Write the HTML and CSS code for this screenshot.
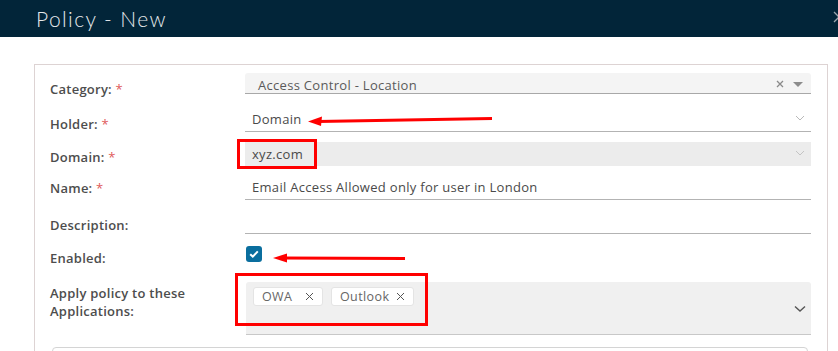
FILE: index.html
```html
<!DOCTYPE html>
<html>
<head>
<meta charset="utf-8">
<link rel="stylesheet" href="styles.css">
</head>
<body>
<header class="hdr">
  <h1 class="title">Policy - New</h1>
  <svg class="close" width="12" height="12" viewBox="0 0 12 12"><path d="M1 1 L11 11 M11 1 L1 11" stroke="#9aa5ad" stroke-width="1.3"/></svg>
</header>
<main class="content">
  <section class="card">
    <div class="row r-cat">
      <label class="lbl">Category: <span class="req">*</span></label>
      <div class="ctl sel-cat">
        <span class="val">Access Control - Location</span>
        <span class="cat-icons">
          <svg width="8" height="8" viewBox="0 0 8 8"><path d="M1 1 L7 7 M7 1 L1 7" stroke="#8a8a8a" stroke-width="1.3"/></svg>
          <span class="cat-tri"></span>
        </span>
      </div>
    </div>
    <div class="row r-holder">
      <label class="lbl">Holder: <span class="req">*</span></label>
      <div class="ctl sel-line">
        <span class="val">Domain</span>
        <svg class="chev-l" width="10" height="6" viewBox="0 0 10 6"><path d="M1 1 L5 5 L9 1" fill="none" stroke="#b9b9b9" stroke-width="1"/></svg>
      </div>
    </div>
    <div class="row r-domain">
      <label class="lbl">Domain: <span class="req">*</span></label>
      <div class="ctl sel-dis">
        <span class="val">xyz.com</span>
        <svg class="chev-l" width="10" height="6" viewBox="0 0 10 6"><path d="M1 1 L5 5 L9 1" fill="none" stroke="#c4c4c4" stroke-width="1"/></svg>
      </div>
    </div>
    <div class="row r-name">
      <label class="lbl">Name: <span class="req">*</span></label>
      <div class="ctl inp">
        <span class="val">Email Access Allowed only for user in London</span>
      </div>
    </div>
    <div class="row r-desc">
      <label class="lbl">Description:</label>
      <div class="ctl inp"></div>
    </div>
    <div class="row r-enabled">
      <label class="lbl">Enabled:</label>
      <div class="ctl">
        <span class="chk"><svg width="10" height="8" viewBox="0 0 10 8"><path d="M1.2 4.2 L3.8 6.6 L8.8 1.4" fill="none" stroke="#fff" stroke-width="2"/></svg></span>
      </div>
    </div>
    <div class="row r-apps">
      <label class="lbl">Apply policy to these<br>Applications:</label>
      <div class="ctl multi">
        <div class="tags">
          <span class="tag t-owa">OWA<svg class="tx" width="9" height="9" viewBox="0 0 9 9"><path d="M1 1 L8 8 M8 1 L1 8" stroke="#555" stroke-width="1"/></svg></span>
          <span class="tag t-out">Outlook<svg class="tx" width="9" height="9" viewBox="0 0 9 9"><path d="M1 1 L8 8 M8 1 L1 8" stroke="#555" stroke-width="1"/></svg></span>
        </div>
        <svg class="chev-d" width="12" height="8" viewBox="0 0 12 8"><path d="M1 1.5 L6 6 L11 1.5" fill="none" stroke="#555" stroke-width="1.4"/></svg>
      </div>
    </div>
    <div class="next"></div>
  </section>
</main>

<div class="mark box1"></div>
<div class="mark box2"></div>
<svg class="arrows" width="838" height="351" viewBox="0 0 838 351">
  <path d="M492 118.5 L318 121.5" stroke="#f00" stroke-width="3" fill="none"/>
  <path d="M308 121.5 L322 116.5 L321 126 Z" fill="#f00"/>
  <path d="M405 258.5 L283 258" stroke="#f00" stroke-width="3" fill="none"/>
  <path d="M273 258 L287 253.5 L287 262.5 Z" fill="#f00"/>
</svg>
</body>
</html>
```
FILE: styles.css
```css
* { box-sizing: border-box; }
html, body { margin: 0; padding: 0; }
body {
  width: 838px;
  height: 351px;
  overflow: hidden;
  background: #fff;
  font-family: "Open Sans", "Liberation Sans", sans-serif;
  color: #565656;
  position: relative;
}
.hdr {
  height: 37px;
  background: #022539;
  display: flex;
  align-items: center;
  padding-left: 36px;
  position: relative;
}
.title {
  margin: 0;
  font-family: "Lato", "Open Sans", sans-serif;
  font-weight: 300;
  font-size: 21px;
  color: #e6e9ec;
  letter-spacing: 1.4px;
}
.close {
  position: absolute;
  left: 833px;
  top: 11px;
}
.content {
  padding: 27px 10px 0 34px;
}
.card {
  width: 794px;
  height: 320px;
  border: 1px solid #ddd3d3;
  border-bottom: none;
  padding: 8px 16px 0 15px;
}
.row {
  display: grid;
  grid-template-columns: 195px 566px;
  align-items: start;
}
.lbl {
  font-size: 13px;
  font-weight: 600;
  color: #4d4d4d;
  line-height: 16px;
  letter-spacing: 0.25px;
}
.req { color: #e05a5a; font-weight: 400; }
.ctl {
  position: relative;
  font-size: 13px;
  color: #4a4a4a;
  letter-spacing: 0.3px;
}
.val { line-height: 16px; }

/* category */
.r-cat { height: 21px; }
.r-cat .lbl { padding-top: 8px; }
.sel-cat {
  height: 21px;
  background: #f4f4f4;
  border-bottom: 1px solid #a8a8a8;
  border-radius: 3px 3px 0 0;
  padding-left: 13px;
  display: flex;
  justify-content: space-between;
  color: #5a5a5a;
}
.sel-cat .val { margin-top: 4px; }
.cat-icons { display: flex; align-items: center; gap: 9px; padding-right: 8px; margin-top: 7px; height: 8px; }
.cat-tri {
  width: 0; height: 0;
  border-left: 5px solid transparent;
  border-right: 5px solid transparent;
  border-top: 5px solid #8c8c8c;
}

/* holder */
.r-holder { margin-top: 13px; height: 25px; }
.r-holder .lbl { padding-top: 9px; }
.sel-line {
  height: 25px;
  border-bottom: 1px solid #b3b3b3;
  padding-left: 7px;
  display: flex;
  align-items: center;
  justify-content: space-between;
}
.sel-line .val { margin-top: -1px; }
.chev-l { margin-right: 6px; margin-top: -3px; }

/* domain */
.r-domain { margin-top: 10px; height: 24px; }
.r-domain .lbl { padding-top: 7px; }
.sel-dis {
  height: 24px;
  background: #ececec;
  padding-left: 7px;
  display: flex;
  align-items: center;
  justify-content: space-between;
}
.sel-dis .val { margin-top: -1px; }

/* inputs */
.r-name { margin-top: 9px; height: 25px; }
.r-name .lbl { padding-top: 5px; }
.inp {
  height: 25px;
  border-bottom: 1px solid #b3b3b3;
  padding-left: 7px;
  display: flex;
  align-items: center;
}
.inp .val { margin-top: -1px; }
.r-desc { margin-top: 9px; height: 25px; }
.r-desc .lbl { padding-top: 8px; }

/* enabled */
.r-enabled { margin-top: 12px; height: 16px; }
.r-enabled .lbl { padding-top: 4px; }
.chk {
  margin-left: 1px;
  width: 16px;
  height: 16px;
  border-radius: 3px;
  background: #0a6e9e;
  display: flex;
  align-items: center;
  justify-content: center;
}

/* apps */
.r-apps { margin-top: 20px; height: 53px; }
.r-apps .lbl { line-height: 18px; padding-top: 2px; }
.multi {
  margin-left: 1px;
  height: 53px;
  background: #f0f0f0;
  border-bottom: 1px solid #c8c8c8;
  border-radius: 3px 3px 0 0;
  display: flex;
  justify-content: space-between;
}
.tags { display: flex; gap: 8px; padding: 5px 0 0 7px; align-items: flex-start; }
.tag {
  height: 19px;
  background: #fff;
  border: 1px solid #e4e4e4;
  border-radius: 3px;
  padding: 0 8px 0 8px;
  display: flex;
  align-items: center;
  font-size: 12.5px;
  color: #666;
  letter-spacing: 0.4px;
}
.t-owa { width: 70px; }
.t-out { width: 83px; }
.tx { margin-left: auto; }
.chev-d { margin: 23px 5px 0 0; }

.next {
  margin: 12px 0 0 2px;
  width: 756px;
  height: 20px;
  border: 1px solid #d4d4d4;
  border-radius: 4px;
}

/* annotations */
.mark {
  position: absolute;
  border: 3px solid #f00;
}
.box1 { left: 237px; top: 139px; width: 80px; height: 30px; }
.box2 { left: 235px; top: 273px; width: 193px; height: 53px; }
.arrows { position: absolute; left: 0; top: 0; pointer-events: none; }
```
